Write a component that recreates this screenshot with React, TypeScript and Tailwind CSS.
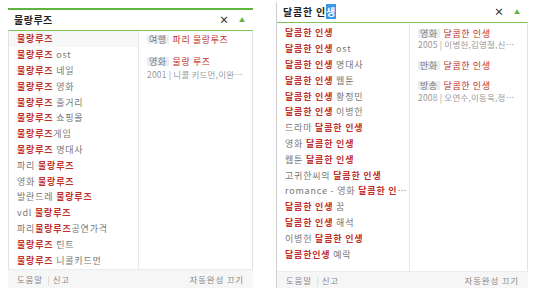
import React from 'react';

type Row = { pre?: string; key: string; post?: string };

const leftRows: Row[] = [
  { key: '물랑루즈' },
  { key: '물랑루즈', post: ' ost' },
  { key: '물랑루즈', post: ' 네일' },
  { key: '물랑루즈', post: ' 영화' },
  { key: '물랑루즈', post: ' 줄거리' },
  { key: '물랑루즈', post: ' 쇼핑몰' },
  { key: '물랑루즈', post: '게임' },
  { key: '물랑루즈', post: ' 명대사' },
  { pre: '파리 ', key: '물랑루즈' },
  { pre: '영화 ', key: '물랑루즈' },
  { pre: '발란드레 ', key: '물랑루즈' },
  { pre: 'vdl ', key: '물랑루즈' },
  { pre: '파리', key: '물랑루즈', post: '공연가격' },
  { key: '물랑루즈', post: ' 틴트' },
  { key: '물랑루즈', post: ' 니콜키드먼' },
];

const rightRows: Row[] = [
  { key: '달콤한 인생' },
  { key: '달콤한 인생', post: ' ost' },
  { key: '달콤한 인생', post: ' 명대사' },
  { key: '달콤한 인생', post: ' 웹툰' },
  { key: '달콤한 인생', post: ' 황정민' },
  { key: '달콤한 인생', post: ' 이병헌' },
  { pre: '드라마 ', key: '달콤한 인생' },
  { pre: '영화 ', key: '달콤한 인생' },
  { pre: '웹툰 ', key: '달콤한 인생' },
  { pre: '고귀한씨의 ', key: '달콤한 인생' },
  { pre: 'romance - 영화 ', key: '달콤한 인', post: '…' },
  { key: '달콤한 인생', post: ' 꿈' },
  { key: '달콤한 인생', post: ' 해석' },
  { pre: '이병헌 ', key: '달콤한 인생' },
  { key: '달콤한인생', post: ' 예락' },
];

const SuggestRow = ({ row, active }: { row: Row; active?: boolean }) => (
  <div className={`h-[15.8px] flex items-center pl-[8px] ${active ? 'bg-[#f7f7f7]' : ''}`}>
    <span className="whitespace-pre tracking-[0.8px] text-[#777]">
      {row.pre}
      <b className="text-[#c0312b] font-bold">{row.key}</b>
      {row.post}
    </span>
  </div>
);

const Tag = ({ children }: { children: React.ReactNode }) => (
  <span className="bg-[#eaeef3] text-[#777] px-[2px] mr-[4px] tracking-[0.5px]">{children}</span>
);

const Controls = () => (
  <div className="ml-auto flex items-center gap-[10px]">
    <span className="text-[10px] font-bold text-[#333] leading-none">×</span>
    <span className="text-[6px] text-[#5fb33f] leading-none">▲</span>
  </div>
);

const Footer = () => (
  <div className="flex-1 flex items-center justify-between px-[9px] bg-[#f6f6f6] border-t border-[#ececec] text-[#888] text-[8.5px] tracking-[0.8px]">
    <span>
      도움말 <span className="text-[#ccc] mx-[2px]">|</span>신고
    </span>
    <span>자동완성 끄기</span>
  </div>
);

export default function App() {
  return (
    <div className="w-[540px] h-[297px] bg-white flex font-['Noto_Sans_CJK_KR',sans-serif] text-[9px] leading-none">
      {/* 물랑루즈 */}
      <div className="ml-[8px] mt-[8px] w-[245px] h-[280px] flex flex-col border-t-2 border-[#5fb33f]">
        <div className="h-[20px] flex items-center pl-[6px] pr-[8px]">
          <div className="font-bold text-[10px] text-[#222] tracking-[0.5px]">물랑루즈</div>
          <Controls />
        </div>
        <div className="h-[239px] flex border-t border-[#7cc35c] border-x border-x-[#e2e2e2]">
          <div className="w-[130px] border-r border-[#e8e8e8]">
            {leftRows.map((r, i) => (
              <SuggestRow key={i} row={r} active={i === 0} />
            ))}
          </div>
          <div className="flex-1 pl-[8px] pt-[1px] tracking-[0.6px]">
            <div className="h-[15.8px] flex items-center">
              <Tag>여행</Tag>
              <span className="text-[#c0312b]">파리 물랑루즈</span>
            </div>
            <div className="mt-[6px] h-[15.8px] flex items-center">
              <Tag>영화</Tag>
              <span className="text-[#c0312b]">물랑 루즈</span>
            </div>
            <div className="text-[#999] text-[8.5px] tracking-[0.2px] whitespace-nowrap">2001 | 니콜 키드먼,이완…</div>
          </div>
        </div>
        <Footer />
      </div>

      {/* 달콤한 인생 */}
      <div className="ml-[23px] mt-[2px] w-[252px] h-[286px] flex flex-col border-l border-[#cfcfcf]">
        <div className="h-[20px] flex items-center pl-[6px] pr-[8px]">
          <div className="font-bold text-[10px] text-[#222] tracking-[0.8px]">
            달콤한 인<span className="bg-[#3d95e6] text-white">생</span>
          </div>
          <Controls />
        </div>
        <div className="h-[249px] flex border-t border-[#7cc35c] border-r border-r-[#e2e2e2]">
          <div className="w-[133px] border-r border-[#e8e8e8] pt-[2px]">
            {rightRows.map((r, i) => (
              <SuggestRow key={i} row={r} />
            ))}
          </div>
          <div className="flex-1 pl-[8px] pt-[3px] tracking-[0.6px]">
            <div className="h-[14px] flex items-center">
              <Tag>영화</Tag>
              <span className="text-[#c0312b]">달콤한 인생</span>
            </div>
            <div className="text-[#999] text-[8.5px] tracking-[0.2px] whitespace-nowrap">2005 | 이병헌,김영철,신…</div>
            <div className="mt-[10px] h-[14px] flex items-center">
              <Tag>만화</Tag>
              <span className="text-[#c0312b]">달콤한 인생</span>
            </div>
            <div className="mt-[6px] h-[14px] flex items-center">
              <Tag>방송</Tag>
              <span className="text-[#c0312b]">달콤한 인생</span>
            </div>
            <div className="text-[#999] text-[8.5px] tracking-[0.2px] whitespace-nowrap">2008 | 오연수,이동욱,정…</div>
          </div>
        </div>
        <Footer />
      </div>
    </div>
  );
}
